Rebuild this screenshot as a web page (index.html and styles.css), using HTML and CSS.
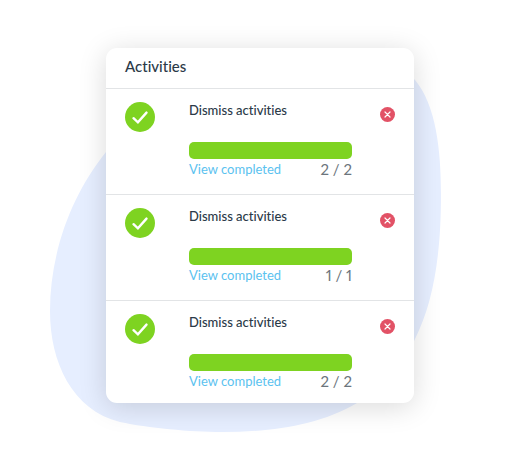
FILE: index.html
```html
<!DOCTYPE html>
<html lang="en">
<head>
  <meta charset="UTF-8">
  <meta name="viewport" content="width=device-width, initial-scale=1.0">
  <title>Activities</title>
  <link rel="stylesheet" href="styles.css">
</head>
<body>
  <svg class="blob" viewBox="0 0 520 450" aria-hidden="true">
    <path d="M106 152 C180 60 372 35 415 80 C436 105 441 150 441 195 C441 260 432 305 415 339 C403 366 385 387 357 403 C318 426 270 432 222 432 C190 432 148 428 120 422 C72 410 50 362 50 311 C50 252 72 194 106 152 Z"/>
  </svg>

  <main class="card">
    <h1 class="card-title">Activities</h1>

    <ul class="activity-list">
      <li class="activity">
        <svg class="check-icon" viewBox="0 0 30 30" aria-hidden="true">
          <circle cx="15" cy="15" r="15"/>
          <path d="M8.5 16.2 L12.9 20.3 L21.5 10.6"/>
        </svg>
        <div class="activity-body">
          <h2 class="activity-name">Dismiss activities</h2>
          <progress class="bar" value="2" max="2" aria-label="Activities completed"></progress>
          <div class="activity-footer">
            <a class="view-link" href="#completed">View completed</a>
            <span class="count">2 / 2</span>
          </div>
        </div>
        <button class="dismiss-btn" type="button" aria-label="Dismiss">
          <svg viewBox="0 0 15 15" aria-hidden="true"><path d="M5 5 L10 10 M10 5 L5 10"/></svg>
        </button>
      </li>

      <li class="activity">
        <svg class="check-icon" viewBox="0 0 30 30" aria-hidden="true">
          <circle cx="15" cy="15" r="15"/>
          <path d="M8.5 16.2 L12.9 20.3 L21.5 10.6"/>
        </svg>
        <div class="activity-body">
          <h2 class="activity-name">Dismiss activities</h2>
          <progress class="bar" value="1" max="1" aria-label="Activities completed"></progress>
          <div class="activity-footer">
            <a class="view-link" href="#completed">View completed</a>
            <span class="count">1 / 1</span>
          </div>
        </div>
        <button class="dismiss-btn" type="button" aria-label="Dismiss">
          <svg viewBox="0 0 15 15" aria-hidden="true"><path d="M5 5 L10 10 M10 5 L5 10"/></svg>
        </button>
      </li>

      <li class="activity">
        <svg class="check-icon" viewBox="0 0 30 30" aria-hidden="true">
          <circle cx="15" cy="15" r="15"/>
          <path d="M8.5 16.2 L12.9 20.3 L21.5 10.6"/>
        </svg>
        <div class="activity-body">
          <h2 class="activity-name">Dismiss activities</h2>
          <progress class="bar" value="2" max="2" aria-label="Activities completed"></progress>
          <div class="activity-footer">
            <a class="view-link" href="#completed">View completed</a>
            <span class="count">2 / 2</span>
          </div>
        </div>
        <button class="dismiss-btn" type="button" aria-label="Dismiss">
          <svg viewBox="0 0 15 15" aria-hidden="true"><path d="M5 5 L10 10 M10 5 L5 10"/></svg>
        </button>
      </li>
    </ul>
  </main>
</body>
</html>
```

FILE: styles.css
```css
* {
  box-sizing: border-box;
}

body {
  position: relative;
  margin: 0;
  padding: 48px 106px;
  background-color: #fff;
  color: #2b3a48;
  font-family: Lato, "Liberation Sans", sans-serif;
  font-variant-ligatures: none;
}

/* Decorative shape behind the card */
.blob {
  position: absolute;
  top: 0;
  left: 0;
  width: 100%;
  fill: #e6eeff;
}

.card {
  position: relative;
  background-color: #fff;
  border-radius: 11px;
  box-shadow: 0 4px 28px rgba(0, 0, 0, 0.15);
}

.card-title {
  margin: 0;
  padding: 8px 19px 12px;
  font-size: 15px;
  font-weight: 500;
  line-height: 20px;
  border-bottom: 1px solid #e2e4e6;
}

.activity-list {
  margin: 0;
  padding: 0;
  list-style: none;
}

.activity {
  display: grid;
  grid-template-columns: 30px 1fr 15px;
  align-items: start;
  padding: 13px 19px 15px;
  border-bottom: 1px solid #e2e4e6;
}

.activity:last-child {
  padding-bottom: 12px;
  border-bottom: none;
}

.check-icon {
  width: 30px;
  height: 30px;
}

.check-icon circle {
  fill: #7ed321;
}

.check-icon path {
  fill: none;
  stroke: #fff;
  stroke-width: 2.4;
  stroke-linecap: round;
}

.activity-body {
  margin: 0 28px 0 34px;
}

.activity-name {
  margin: 0 0 24px;
  font-size: 13px;
  font-weight: 500;
  line-height: 16px;
}

.bar {
  display: block;
  width: 100%;
  height: 17px;
  border: none;
  border-radius: 5px;
  overflow: hidden;
  appearance: none;
}

.bar::-webkit-progress-bar {
  background-color: #e9ecef;
}

.bar::-webkit-progress-value {
  background-color: #7ed321;
}

.activity-footer {
  display: flex;
  justify-content: space-between;
  line-height: 20px;
}

.view-link {
  color: #5bc2ef;
  font-size: 13px;
  text-decoration: none;
}

.count {
  color: #6c757d;
  font-size: 15px;
  font-variant-numeric: proportional-nums;
}

.dismiss-btn {
  width: 15px;
  height: 15px;
  margin-top: 5px;
  padding: 0;
  border: none;
  border-radius: 50%;
  background-color: #e25266;
  cursor: pointer;
}

.dismiss-btn svg {
  display: block;
  stroke: #fff;
  stroke-width: 1.2;
  stroke-linecap: round;
}
```
